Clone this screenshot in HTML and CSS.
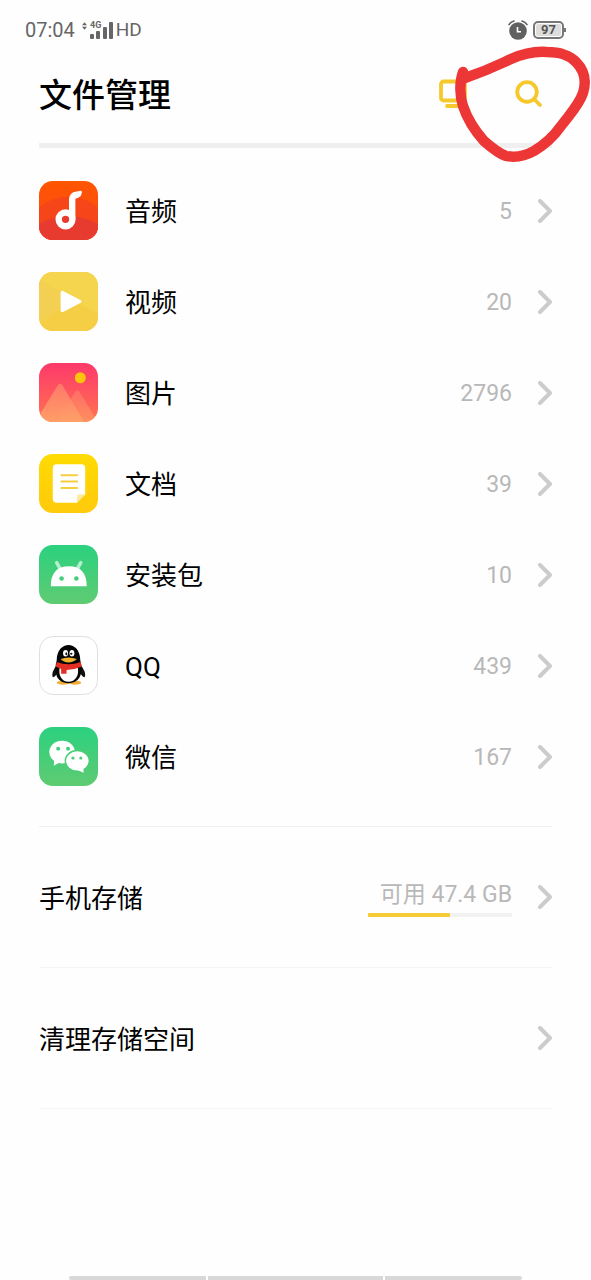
FILE: index.html
```html
<!DOCTYPE html>
<html lang="zh-CN">
<head>
    <meta charset="UTF-8">
    <meta name="viewport" content="width=device-width, initial-scale=1.0">
    <title>文件管理</title>
    <link rel="stylesheet" href="styles.css">
</head>
<body>
    <div class="status-bar">
        <div class="status-left">
            <span class="time">07:04</span>
            <svg class="signal" width="33" height="20" viewBox="0 0 33 20">
                <path d="M0 5.2L2.500 2.2L5 5.2ZM0 6.8L2.500 9.8L5 6.8Z" fill="#666"/>
                <text x="8" y="8" class="network">4G</text>
                <rect x="8" y="14" width="4" height="5" rx="1" fill="#666"/>
                <rect x="14" y="11" width="4" height="8" rx="1" fill="#666"/>
                <rect x="21" y="7" width="4" height="12" rx="1" fill="#666"/>
                <rect x="27" y="2" width="4" height="17" rx="1" fill="#666"/>
            </svg>
            <span class="hd">HD</span>
        </div>
        <div class="status-right">
            <svg width="20" height="20" viewBox="0 0 20 20" fill="none">
                <circle cx="10" cy="11" r="8.8" fill="#606060"/>
                <path d="M1 4.6Q2.6 2 6 1M19 4.6Q17.4 2 14 1" stroke="#606060" stroke-width="1.6" stroke-linecap="round"/>
                <path d="M9.5 7V11.8H13" stroke="#fff" stroke-width="1.6"/>
            </svg>
            <span class="battery"><span class="battery-level">97</span></span>
        </div>
    </div>

    <header class="header">
        <h1 class="title">文件管理</h1>
        <div class="actions">
            <button class="icon-button" aria-label="投屏">
                <svg width="28" height="30" viewBox="0 0 28 30" fill="none" stroke="#f5c92c" stroke-width="3.8" stroke-linecap="round">
                    <rect x="2" y="3.500" width="24" height="19" rx="2.5"/>
                    <path d="M8 28H20"/>
                </svg>
            </button>
            <button class="icon-button" aria-label="搜索">
                <svg width="28" height="30" viewBox="0 0 28 30" fill="none" stroke="#f5c92c" stroke-width="3.8" stroke-linecap="round">
                    <circle cx="12" cy="14" r="9.8"/>
                    <path d="M19 21L25 27"/>
                </svg>
            </button>
        </div>
        <svg class="marker" width="140" height="120" viewBox="451 46 140 120" fill="none">
            <path d="M463 72C459 83 460 97 463 106C467 118 476 132 484 141C492 148 500 154 506 156C516 158 525 156 534 151C544 145 554 136 561 126C570 114 579 105 583 93C587 80 584 70 576 62C568 54 559 52 547 52C534 51 520 55 511 59C498 65 489 70 465 78" stroke="#ed3737" stroke-width="10.4" stroke-linecap="round" stroke-linejoin="round"/>
        </svg>
    </header>

    <main class="content">
        <!-- 文件分类 -->
        <ul class="list">
            <li>
                <a class="row" href="#">
                    <svg class="app-icon" viewBox="0 0 60 60">
                        <defs>
                            <linearGradient id="audio" x1="0" y1="0" x2="0" y2="1">
                                <stop offset="0" stop-color="#ff5600"/>
                                <stop offset="1" stop-color="#f9461d"/>
                            </linearGradient>
                            <clipPath id="tile"><rect width="60" height="60" rx="14"/></clipPath>
                        </defs>
                        <g clip-path="url(#tile)">
                            <rect width="60" height="60" fill="url(#audio)"/>
                            <circle cx="30" cy="62" r="46" fill="#f7451a"/>
                            <ellipse cx="30" cy="68" rx="46" ry="32" fill="#e83b30"/>
                        </g>
                        <circle cx="27" cy="39" r="7" fill="none" stroke="#fff" stroke-width="6.500"/>
                        <path d="M30.500 38V19Q31 12 37 11L42.500 10Q44 10 43.500 12.500Q43 16 40 17L37 18V38Z" fill="#fff"/>
                    </svg>
                    <span class="label">音频</span>
                    <span class="count">5</span>
                    <svg class="arrow" viewBox="0 0 14 24"><path d="M2 2L12 12L2 22"/></svg>
                </a>
            </li>
            <li>
                <a class="row" href="#">
                    <svg class="app-icon" viewBox="0 0 60 60">
                        <g clip-path="url(#tile)">
                            <rect width="60" height="60" fill="#f6d249"/>
                            <path d="M0 7L60 42V0H0Z" fill="#f6d54e"/>
                            <path d="M0 7L35 28L0 52Z" fill="#f4d052"/>
                            <path d="M0 52L33 30L60 42V60H0Z" fill="#f5ce46"/>
                        </g>
                        <path d="M22 21.500Q22 18 25 19.500L42 28.500Q44.500 30 42 31.500L25 40.500Q22 42 22 39Z" fill="#fff"/>
                    </svg>
                    <span class="label">视频</span>
                    <span class="count">20</span>
                    <svg class="arrow" viewBox="0 0 14 24"><path d="M2 2L12 12L2 22"/></svg>
                </a>
            </li>
            <li>
                <a class="row" href="#">
                    <svg class="app-icon" viewBox="0 0 60 60">
                        <defs>
                            <linearGradient id="photo" x1="0" y1="0" x2="0" y2="1">
                                <stop offset="0" stop-color="#fd396b"/>
                                <stop offset="1" stop-color="#ff7350"/>
                            </linearGradient>
                            <linearGradient id="hill" x1="0" y1="0" x2="0" y2="1">
                                <stop offset="0" stop-color="#ff7d6b"/>
                                <stop offset="1" stop-color="#ffa268"/>
                            </linearGradient>
                        </defs>
                        <g clip-path="url(#tile)">
                            <rect width="60" height="60" fill="url(#photo)"/>
                            <path d="M18 60L37 29Q39 27 41 29L60 60Z" fill="url(#hill)" opacity="0.6"/>
                            <path d="M-4 60L19.500 22Q21.500 20 23.500 22L46 60Z" fill="url(#hill)" opacity="0.9"/>
                        </g>
                        <circle cx="42" cy="15" r="5.600" fill="#ffc40c"/>
                    </svg>
                    <span class="label">图片</span>
                    <span class="count">2796</span>
                    <svg class="arrow" viewBox="0 0 14 24"><path d="M2 2L12 12L2 22"/></svg>
                </a>
            </li>
            <li>
                <a class="row" href="#">
                    <svg class="app-icon" viewBox="0 0 60 60">
                        <defs>
                            <linearGradient id="doc" x1="0" y1="0" x2="0" y2="1">
                                <stop offset="0" stop-color="#ffdb02"/>
                                <stop offset="1" stop-color="#ffca0c"/>
                            </linearGradient>
                        </defs>
                        <rect width="60" height="60" rx="14" fill="url(#doc)"/>
                        <path d="M18 10.500H43Q47 10.500 47 14.500V41L38.500 49.500H18Q14 49.500 14 45.500V14.500Q14 10.500 18 10.500Z" fill="#fff"/>
                        <path d="M38.500 49.500V43.500Q38.500 41 41 41H47Z" fill="#fbe9a4"/>
                        <path d="M22 21.500H39.500M22 28H39.500M22 34.500H39.500" stroke="#f5cd40" stroke-width="2"/>
                    </svg>
                    <span class="label">文档</span>
                    <span class="count">39</span>
                    <svg class="arrow" viewBox="0 0 14 24"><path d="M2 2L12 12L2 22"/></svg>
                </a>
            </li>
            <li>
                <a class="row" href="#">
                    <svg class="app-icon" viewBox="0 0 60 60">
                        <defs>
                            <linearGradient id="green" x1="0" y1="0" x2="0" y2="1">
                                <stop offset="0" stop-color="#2bd17f"/>
                                <stop offset="1" stop-color="#5fcb72"/>
                            </linearGradient>
                        </defs>
                        <rect width="60" height="60" rx="14" fill="url(#green)"/>
                        <path d="M18 18L22 25M42.500 18L38.500 25" stroke="#b5efcf" stroke-width="3.600" stroke-linecap="round"/>
                        <path d="M12 42Q12 21.500 30.500 21.500Q48.500 21.500 48.500 42Z" fill="#fff"/>
                        <circle cx="23" cy="34" r="2.300" fill="#43ce79"/>
                        <circle cx="38" cy="34" r="2.300" fill="#43ce79"/>
                    </svg>
                    <span class="label">安装包</span>
                    <span class="count">10</span>
                    <svg class="arrow" viewBox="0 0 14 24"><path d="M2 2L12 12L2 22"/></svg>
                </a>
            </li>
            <li>
                <a class="row" href="#">
                    <svg class="app-icon" viewBox="0 0 60 60">
                        <rect x="0.500" y="0.500" width="59" height="59" rx="14" fill="#fff" stroke="#dedede"/>
                        <ellipse cx="24.500" cy="47.500" rx="6.500" ry="2" fill="#f0ae35"/>
                        <ellipse cx="36.500" cy="47.500" rx="6.500" ry="2" fill="#f0ae35"/>
                        <path d="M18.500 29Q12 37 14 42Q16 42 19 37ZM42 29Q48.500 37 46.500 42Q44.500 42 41.500 37Z" fill="#111"/>
                        <path d="M18 25C18 4 42 4 42 25C45 36 43 48 30 48C17 48 15 36 18 25Z" fill="#050505"/>
                        <path d="M21 32H39.500C41 40 37 46.500 30 46.500C23 46.500 19.500 40 21 32Z" fill="#fff"/>
                        <ellipse cx="27" cy="17.500" rx="2.500" ry="3.300" fill="#fff"/>
                        <ellipse cx="33.500" cy="17.500" rx="2.500" ry="3.300" fill="#fff"/>
                        <ellipse cx="27.800" cy="18" rx="1" ry="1.600" fill="#111"/>
                        <ellipse cx="32.800" cy="18" rx="1.200" ry="1" fill="#111"/>
                        <path d="M22 23.500Q30 20 38.500 23.500Q35 27 30 27Q25 27 22 23.500Z" fill="#f1b02f"/>
                        <path d="M18 26.500Q30 31 42.500 26.500L43.500 31Q36 34.500 28 34.500V38.500H22.500V33.500L17 31Z" fill="#e52f25"/>
                    </svg>
                    <span class="label">QQ</span>
                    <span class="count">439</span>
                    <svg class="arrow" viewBox="0 0 14 24"><path d="M2 2L12 12L2 22"/></svg>
                </a>
            </li>
            <li>
                <a class="row" href="#">
                    <svg class="app-icon" viewBox="0 0 60 60">
                        <rect width="60" height="60" rx="14" fill="url(#green)"/>
                        <ellipse cx="23.500" cy="25.500" rx="13" ry="11.500" fill="#fff"/>
                        <path d="M15.500 33L15 39.500L22 35.500Z" fill="#fff"/>
                        <circle cx="19.500" cy="22" r="2" fill="#3dcf7c"/>
                        <circle cx="29.500" cy="22" r="2" fill="#3dcf7c"/>
                        <ellipse cx="39" cy="34.500" rx="12.200" ry="10.500" fill="#fff" stroke="#4bcd78" stroke-width="1.500"/>
                        <path d="M39.500 44L45.500 46.500L45 41Z" fill="#fff"/>
                        <circle cx="34.500" cy="31.500" r="1.600" fill="#4bcd78"/>
                        <circle cx="42.500" cy="31.500" r="1.600" fill="#4bcd78"/>
                    </svg>
                    <span class="label">微信</span>
                    <span class="count">167</span>
                    <svg class="arrow" viewBox="0 0 14 24"><path d="M2 2L12 12L2 22"/></svg>
                </a>
            </li>
        </ul>

        <!-- 存储 -->
        <a class="row storage-row" href="#">
            <span class="label">手机存储</span>
            <span class="storage">
                <span class="count">可用 47.4 GB</span>
                <span class="bar"><span class="bar-used" style="width: 57%"></span></span>
            </span>
            <svg class="arrow" viewBox="0 0 14 24"><path d="M2 2L12 12L2 22"/></svg>
        </a>
        <a class="row storage-row" href="#">
            <span class="label">清理存储空间</span>
            <svg class="arrow" viewBox="0 0 14 24"><path d="M2 2L12 12L2 22"/></svg>
        </a>
    </main>

    <div class="gesture-bar">
        <span class="side"></span>
        <span class="middle"></span>
        <span class="side"></span>
    </div>
</body>
</html>
```

FILE: styles.css
```css
* {
    box-sizing: border-box;
}

body {
    font-family: Roboto, "Noto Sans CJK SC", sans-serif;
    display: flex;
    flex-direction: column;
    min-height: 100vh;
    background-color: #fefefe;
    color: #000;
    margin: 0;
}

/* 状态栏 */
.status-bar {
    display: flex;
    justify-content: space-between;
    align-items: center;
    height: 60px;
    padding: 0 27px 0 25px;
    color: #666;
}

.status-left,
.status-right {
    display: flex;
    align-items: center;
}

.time {
    font-size: 20px;
    line-height: 24px;
}

.hd {
    font-size: 19px;
    line-height: 24px;
}

.signal {
    margin-left: 7px;
    margin-right: 1px;
}

.network {
    font-size: 9px;
    font-weight: bold;
    fill: #666;
}

.status-right {
    gap: 5px;
}

.battery {
    position: relative;
    border: 2px solid #777;
    border-radius: 5px;
    padding: 1px;
    width: 31px;
    height: 18px;
}

.battery::after {
    content: "";
    position: absolute;
    right: -4px;
    top: 5px;
    width: 2px;
    height: 4px;
    background-color: #777;
}

.battery-level {
    display: block;
    background-color: #ddd;
    border-radius: 2px;
    color: #555;
    font-size: 13px;
    font-weight: bold;
    line-height: 12px;
    text-align: center;
}

/* 标题栏 */
.header {
    position: relative;
    display: flex;
    justify-content: space-between;
    align-items: center;
    height: 88px;
    margin: 0 39px;
    padding-bottom: 14px;
    border-bottom: 5px solid #efefef;
}

.title {
    margin: 0;
    padding-top: 2px;
    font-size: 33px;
    font-weight: 500;
    line-height: 44px;
}

.actions {
    display: flex;
    gap: 48px;
    padding-right: 9px;
    padding-bottom: 3px;
}

.icon-button {
    display: flex;
    border: none;
    background: none;
    padding: 0;
    cursor: pointer;
}

.marker {
    position: absolute;
    right: -39px;
    top: -14px;
    pointer-events: none;
}

/* 列表 */
.content {
    flex: 1;
    padding: 17px 39px 0;
}

.list {
    list-style: none;
    margin: 0;
    padding: 0 0 24px;
    border-bottom: 1px solid #efefef;
}

.row {
    display: flex;
    align-items: center;
    height: 91px;
    color: inherit;
    text-decoration: none;
}

.app-icon {
    width: 59px;
    height: 59px;
    margin-right: 27px;
}

.label {
    flex: 1;
    padding-top: 3px;
    font-size: 26px;
    line-height: 36px;
}

.count {
    padding-top: 3px;
    color: #b8b8b8;
    font-size: 23px;
    line-height: 28px;
}

.arrow {
    width: 14px;
    height: 24px;
    margin-left: 26px;
    fill: none;
    stroke: #ccc;
    stroke-width: 4;
    stroke-linecap: round;
    stroke-linejoin: round;
}

.storage-row {
    height: 141px;
    border-bottom: 1px solid #f5f5f5;
}

.storage {
    display: flex;
    flex-direction: column;
    gap: 4px;
    width: 144px;
    text-align: right;
}

.bar {
    height: 4px;
    background-color: #f2f2f2;
}

.bar-used {
    display: block;
    height: 4px;
    border-radius: 1px;
    background-color: #f5cc35;
}

/* 底部手势条 */
.gesture-bar {
    display: flex;
    gap: 2px;
    height: 4px;
    padding: 0 69px;
}

.gesture-bar span {
    background-color: #d8d8d8;
}

.side {
    flex: 137;
}

.side:first-child {
    border-radius: 2px 0 0 2px;
}

.side:last-child {
    border-radius: 0 2px 2px 0;
}

.middle {
    flex: 175;
}
```
